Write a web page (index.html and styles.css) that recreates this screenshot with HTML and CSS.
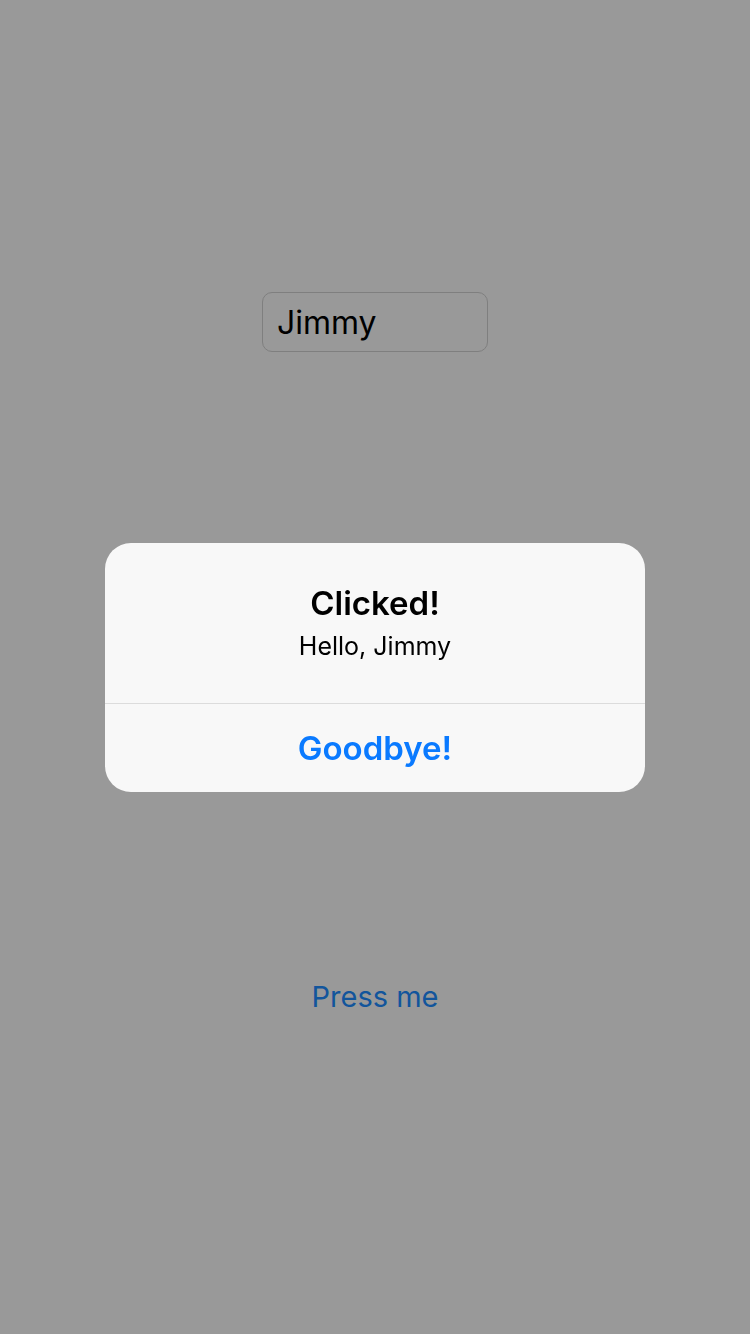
FILE: index.html
```html
<!DOCTYPE html>
<html>
<head>
<meta charset="utf-8">
<link rel="stylesheet" href="styles.css">
</head>
<body>
<main class="screen">
  <div class="field">Jimmy</div>
  <div class="press">Press me</div>
</main>
<div class="overlay">
  <div class="alert">
    <div class="alert-body">
      <div class="alert-title">Clicked!</div>
      <div class="alert-msg">Hello, Jimmy</div>
    </div>
    <div class="alert-action">Goodbye!</div>
  </div>
</div>
</body>
</html>
```
FILE: styles.css
```css
html, body {
  margin: 0;
  padding: 0;
  width: 750px;
  height: 1334px;
  background: #999999;
  font-family: Inter, "Noto Sans", sans-serif;
  overflow: hidden;
}
.screen {
  display: flex;
  flex-direction: column;
  align-items: center;
  padding-top: 292px;
}
.field {
  box-sizing: border-box;
  width: 226px;
  height: 60px;
  border: 1px solid #7f7f7f;
  border-radius: 10px;
  padding: 0 14px;
  display: flex;
  align-items: center;
  font-size: 32px;
  color: #000;
}
.press {
  margin-top: 625px;
  font-size: 29px;
  color: #12559c;
  line-height: 40px;
}
.overlay {
  position: fixed;
  inset: 0;
  display: flex;
  align-items: center;
  justify-content: center;
}
.alert {
  width: 540px;
  height: 249px;
  background: #f8f8f8;
  border-radius: 26px;
  display: flex;
  flex-direction: column;
  overflow: hidden;
}
.alert-body {
  height: 161px;
  box-sizing: border-box;
  padding-top: 38px;
  display: flex;
  flex-direction: column;
  align-items: center;
  border-bottom: 1px solid #dcdcdc;
}
.alert-title {
  font-size: 33px;
  font-weight: 600;
  color: #000;
  line-height: 44px;
}
.alert-msg {
  font-size: 25px;
  color: #000;
  line-height: 34px;
  margin-top: 4px;
}
.alert-action {
  flex: 1;
  display: flex;
  align-items: center;
  justify-content: center;
  font-size: 33px;
  font-weight: 600;
  color: #0a7aff;
}
```
